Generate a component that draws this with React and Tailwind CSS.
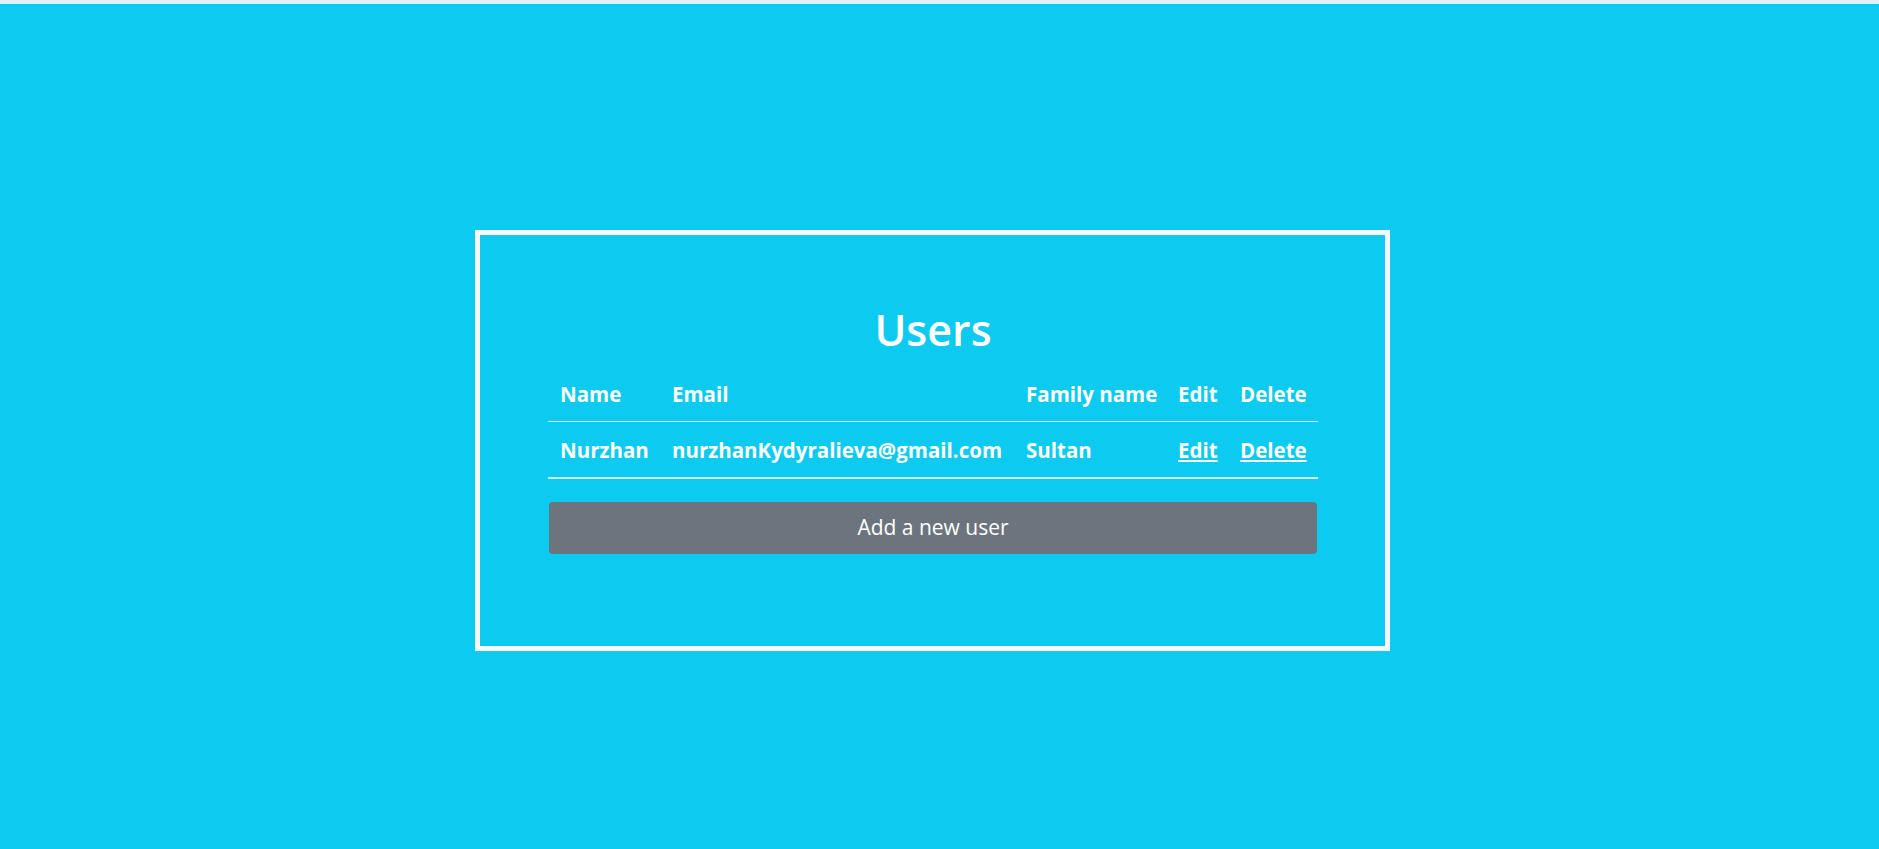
export default function App() {
    const font = { fontFamily: '"Open Sans", "Noto Sans", sans-serif' };
    return (
        <div className="h-[849px] overflow-hidden bg-[#0dcaf0] border-t-4 border-[#dff1f5] text-white" style={font}>
            {/* Users card */}
            <div className="mt-[226px] ml-[475px] w-[915px] border-[5px] border-[#f8f9fa] pl-[68px] pr-[67px] pt-[68px] pb-[92px]">
                <h2 className="text-center text-[43px] leading-[54px] font-semibold mb-[8px]">Users</h2>

                <table className="w-[770px] table-fixed border-collapse text-[20.5px] font-bold whitespace-nowrap">
                    <thead>
                        <tr className="border-b border-[#d4f2f9]">
                            <th className="w-[112px] h-[56px] px-3 pt-[4px] text-left">Name</th>
                            <th className="w-[354px] h-[56px] px-3 pt-[4px] text-left">Email</th>
                            <th className="w-[152px] h-[56px] px-3 pt-[4px] text-left">Family name</th>
                            <th className="w-[62px] h-[56px] px-3 pt-[4px] text-left">Edit</th>
                            <th className="w-[90px] h-[56px] px-3 pt-[4px] text-left">Delete</th>
                        </tr>
                    </thead>
                    <tbody>
                        <tr className="border-b-2 border-[#d4f2f9]">
                            <td className="h-[57px] px-3 pt-[2px]">Nurzhan</td>
                            <td className="h-[57px] px-3 pt-[2px]">nurzhanKydyralieva@gmail.com</td>
                            <td className="h-[57px] px-3 pt-[2px]">Sultan</td>
                            <td className="h-[57px] px-3 pt-[2px]"><a href="#" className="underline">Edit</a></td>
                            <td className="h-[57px] px-3 pt-[2px]"><a href="#" className="underline">Delete</a></td>
                        </tr>
                    </tbody>
                </table>

                <button className="mt-[23px] w-[768px] h-[52px] ml-px bg-[#6c757d] rounded-[4px] text-[21px] text-white">
                    Add a new user
                </button>
            </div>
        </div>
    );
}
